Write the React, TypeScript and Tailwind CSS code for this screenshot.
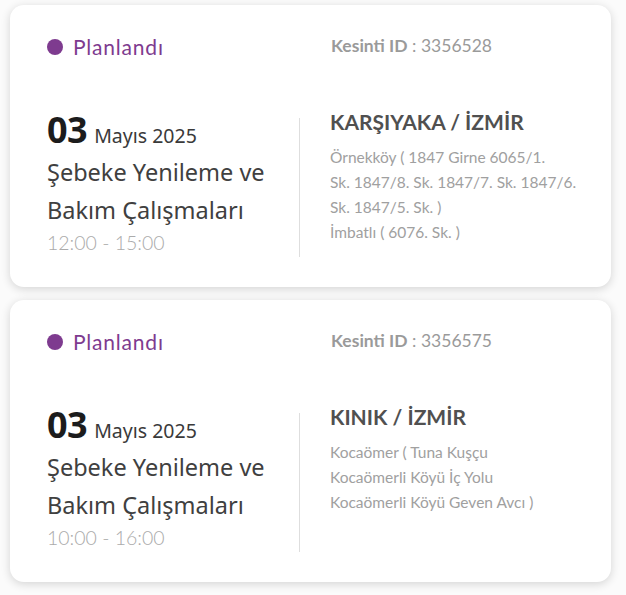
import React from "react";

type Outage = {
  id: string;
  day: string;
  month: string;
  time: string;
  place: string;
  lines: string[];
};

const data: Outage[] = [
  {
    id: "3356528",
    day: "03",
    month: "Mayıs 2025",
    time: "12:00 - 15:00",
    place: "KARŞIYAKA / İZMİR",
    lines: [
      "Örnekköy ( 1847 Girne 6065/1.",
      "Sk. 1847/8. Sk. 1847/7. Sk. 1847/6.",
      "Sk. 1847/5. Sk. )",
      "İmbatlı ( 6076. Sk. )",
    ],
  },
  {
    id: "3356575",
    day: "03",
    month: "Mayıs 2025",
    time: "10:00 - 16:00",
    place: "KINIK / İZMİR",
    lines: [
      "Kocaömer ( Tuna Kuşçu",
      "Kocaömerli Köyü İç Yolu",
      "Kocaömerli Köyü Geven Avcı )",
    ],
  },
];

const geo = "font-['Lato','Inter',sans-serif]";
const hum = "font-['Noto_Sans','Open_Sans',sans-serif]";

function Card({ o }: { o: Outage }) {
  return (
    <div className="w-[601px] h-[282px] rounded-[14px] bg-white shadow-[0_2px_10px_rgba(0,0,0,0.16)] pl-[37px] pr-[24px] pt-[29px]">
      <div className="flex">
        <div className="w-[253px] flex items-center gap-[10px]">
          <span className="w-[16px] h-[16px] rounded-full bg-[#7e3b8f]" />
          <span className={`${geo} text-[21px] tracking-[0.8px] leading-[26px] text-[#7e3b8f]`}>Planlandı</span>
        </div>
        <div className={`pl-[31px] ${geo} text-[17.5px] leading-[24px] text-[#9a9a9a]`}>
          <span className="font-bold">Kesinti ID</span>
          <span> : {o.id}</span>
        </div>
      </div>
      <div className="flex mt-[58px]">
        <div className="w-[253px] h-[139px] border-r border-[#dedede]">
          <div className={`${hum} flex items-baseline gap-[7px] leading-[30px] -mt-[3px]`}>
            <span className="text-[36px] font-bold text-[#1c1c1c] tracking-[-0.5px]">{o.day}</span>
            <span className="text-[19.5px] text-[#3a3a3a]">{o.month}</span>
          </div>
          <div className={`${hum} text-[23.5px] leading-[38px] text-[#404040] mt-[2px]`}>
            Şebeke Yenileme ve
            <br />
            Bakım Çalışmaları
          </div>
          <div className={`${geo} text-[19.5px] leading-[26px] text-[#ababab] font-light mt-[1px]`}>{o.time}</div>
        </div>
        <div className="pl-[30px] -mt-[10px]">
          <div className={`${geo} text-[21px] font-bold leading-[28px] text-[#505050]`}>{o.place}</div>
          <div className={`${geo} text-[15.5px] leading-[25px] text-[#a0a0a0] mt-[9px]`}>
            {o.lines.map((l, i) => (
              <div key={i}>{l}</div>
            ))}
          </div>
        </div>
      </div>
    </div>
  );
}

export default function App() {
  return (
    <div className="w-[626px] h-[595px] bg-[#fbfbfb] px-[10px] pt-[5px] flex flex-col gap-[13px]">
      {data.map((o) => (
        <Card key={o.id} o={o} />
      ))}
    </div>
  );
}
